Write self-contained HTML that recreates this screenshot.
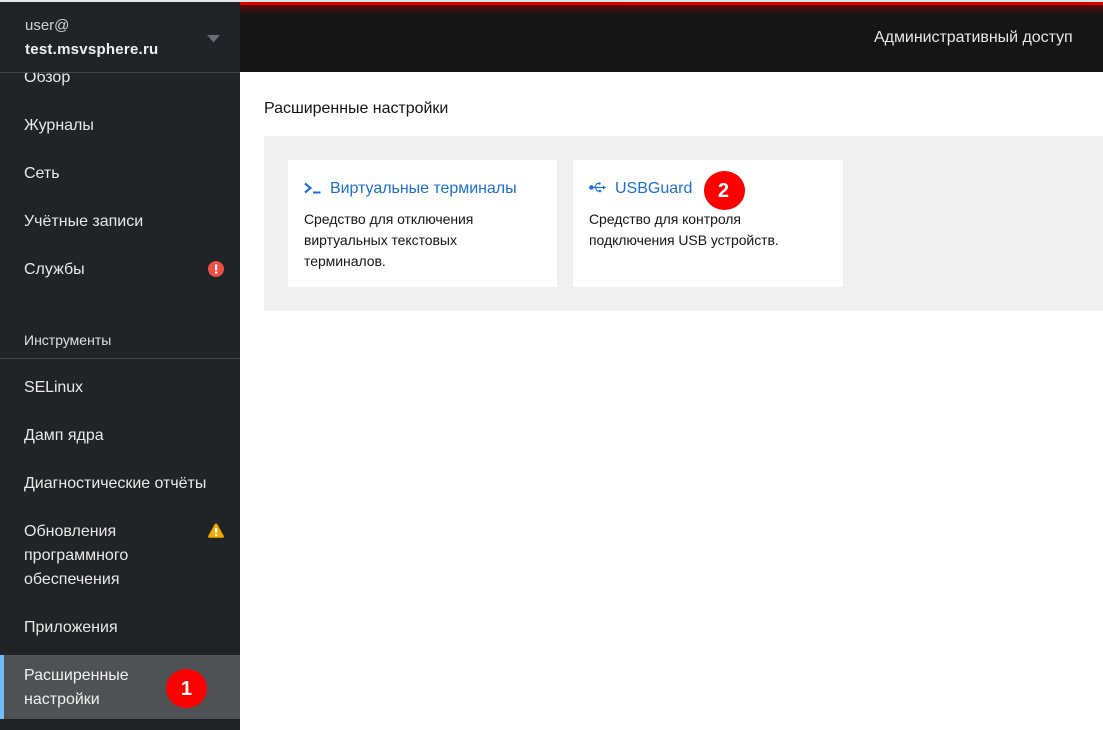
<!DOCTYPE html>
<html lang="ru">
<head>
<meta charset="utf-8">
<title>Расширенные настройки</title>
<style>
*{box-sizing:border-box}
html,body{margin:0;padding:0;width:1103px;height:730px;overflow:hidden;background:#fff;font-family:"Liberation Sans",sans-serif}
.a{position:absolute;white-space:nowrap}
#side{position:absolute;left:0;top:2px;width:240px;height:728px;background:#212427}
.nav{position:absolute;left:24px;color:#e8e8e8;font-size:16px;line-height:24px;white-space:nowrap}
.card{position:absolute;top:160px;height:127px;background:#fff}
.ct{position:absolute;color:#1a6fd4;font-size:16px;line-height:20px;white-space:nowrap}
.cd{position:absolute;color:#151515;font-size:14px;line-height:21px;white-space:nowrap;letter-spacing:-.05px}
.badge{position:absolute;width:41.5px;height:39px;border-radius:50%;background:#fe0000;color:#fff;font-weight:bold;font-size:20px;line-height:41px;text-align:center}
</style>
</head>
<body>
<div class="a" style="left:0;top:0;width:1103px;height:2px;background:#e6e6e6"></div>
<div class="a" style="left:240px;top:2px;width:863px;height:70px;background:#151515"></div>
<div class="a" style="left:240px;top:2px;width:863px;height:3px;background:#e00000"></div>
<div class="a" style="left:240px;top:5px;width:863px;height:10px;background:linear-gradient(#5a0c0c,#151515)"></div>
<div class="a" style="left:874px;top:28px;color:#e8e8e8;font-size:16px;line-height:20px;letter-spacing:-.03px">Административный доступ</div>

<div id="side"></div>
<div class="nav" style="top:66px">Обзор</div>
<div class="a" style="left:0;top:2px;width:240px;height:70px;background:#212427"></div>
<div class="a" style="left:0;top:72px;width:240px;height:1px;background:#44474a"></div>
<div class="a" style="left:25px;top:16px;color:#d2d2d2;font-size:15px;line-height:20px">user@</div>
<div class="a" style="left:25px;top:40px;color:#f0f0f0;font-size:15px;line-height:20px;font-weight:bold;letter-spacing:.25px">test.msvsphere.ru</div>
<svg class="a" style="left:207px;top:35px" width="13" height="8" viewBox="0 0 13 8"><path d="M0 0H13L6.5 7.5Z" fill="#6a6e73"/></svg>

<div class="nav" style="top:114px">Журналы</div>
<div class="nav" style="top:162px">Сеть</div>
<div class="nav" style="top:210px">Учётные записи</div>
<div class="nav" style="top:258px">Службы</div>
<svg class="a" style="left:208px;top:261px" width="16" height="16" viewBox="0 0 16 16"><circle cx="8" cy="8" r="8" fill="#ef5045"/><rect x="7" y="3.5" width="2.2" height="5.8" fill="#fff"/><rect x="7" y="10.5" width="2.2" height="2.2" fill="#fff"/></svg>

<div class="a" style="left:24px;top:331px;color:#e0e0e0;font-size:14px;line-height:18px">Инструменты</div>
<div class="a" style="left:0;top:358px;width:240px;height:1px;background:#44474a"></div>
<div class="nav" style="top:376px;letter-spacing:-.1px">SELinux</div>
<div class="nav" style="top:424px">Дамп ядра</div>
<div class="nav" style="top:472px;letter-spacing:-.03px">Диагностические отчёты</div>
<div class="nav" style="top:520px">Обновления<br>программного<br>обеспечения</div>
<svg class="a" style="left:208px;top:523px" width="16" height="15" viewBox="0 0 16 15"><path d="M8 0.5C8.6 0.5 9 .8 9.3 1.3L15.7 12.8C16.2 13.7 15.6 14.8 14.6 14.8H1.4C.4 14.8-.2 13.7.3 12.8L6.7 1.3C7 .8 7.4.5 8 .5Z" fill="#f0ab00"/><rect x="7" y="5" width="2.2" height="5" fill="#fff"/><rect x="7" y="11" width="2.2" height="2.2" fill="#fff"/></svg>
<div class="nav" style="top:616px">Приложения</div>

<div class="a" style="left:0;top:655px;width:240px;height:64px;background:#4f5255"></div>
<div class="a" style="left:0;top:655px;width:4px;height:64px;background:#73bcf7"></div>
<div class="nav" style="top:664px;color:#f0f0f0">Расширенные<br>настройки</div>
<div class="badge" style="left:165.7px;top:669px">1</div>

<div class="a" style="left:264px;top:99px;color:#151515;font-size:16px;line-height:20px;letter-spacing:-.03px">Расширенные настройки</div>
<div class="a" style="left:264px;top:136px;width:839px;height:175px;background:#f0f0f0"></div>

<div class="card" style="left:288px;width:269px"></div>
<svg class="a" style="left:304px;top:182px" width="17" height="13" viewBox="0 0 17 13"><path d="M1 1.5L6.5 6 1 10.5" fill="none" stroke="#1a6fd4" stroke-width="2.1"/><rect x="9" y="9.5" width="7.5" height="2" fill="#1a6fd4"/></svg>
<div class="ct" style="left:330px;top:179px;letter-spacing:-.03px">Виртуальные терминалы</div>
<div class="cd" style="left:304px;top:209px">Средство для отключения<br>виртуальных текстовых<br>терминалов.</div>

<div class="card" style="left:573px;width:270px"></div>
<svg class="a" style="left:589px;top:181px" width="17" height="13" viewBox="0 0 17 13"><circle cx="2.3" cy="6.5" r="2.2" fill="#1a6fd4"/><path d="M3 6.5H14" stroke="#1a6fd4" stroke-width="1.2"/><path d="M14 4.5L17 6.5 14 8.5Z" fill="#1a6fd4"/><path d="M5.5 6.5L8 2.5H9.5M6.5 6.5L8 10H10" fill="none" stroke="#1a6fd4" stroke-width="1.1"/><rect x="9.3" y="1.3" width="2.4" height="2.4" rx="1.2" fill="#1a6fd4"/><rect x="9.8" y="8.8" width="2.4" height="2.4" fill="#1a6fd4"/></svg>
<div class="ct" style="left:615px;top:179px;letter-spacing:0">USBGuard</div>
<div class="cd" style="left:589px;top:209px">Средство для контроля<br>подключения USB устройств.</div>
<div class="badge" style="left:703.7px;top:171px;text-indent:-2px">2</div>
</body>
</html>
